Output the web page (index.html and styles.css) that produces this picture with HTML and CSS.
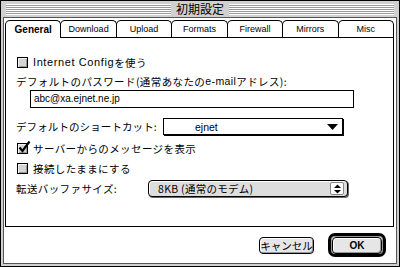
FILE: index.html
```html
<!DOCTYPE html>
<html lang="ja">
<head>
<meta charset="utf-8">
<title>初期設定</title>
<link rel="stylesheet" href="styles.css">
</head>
<body>
<div class="window">
  <div class="titlebar">
    <span class="stripes"></span>
    <span class="title">初期設定</span>
    <span class="stripes"></span>
  </div>
  <div class="frame">
    <div class="content">
      <div class="tabs">
        <div class="tab active">General</div>
        <div class="tab">Download</div>
        <div class="tab">Upload</div>
        <div class="tab">Formats</div>
        <div class="tab">Firewall</div>
        <div class="tab">Mirrors</div>
        <div class="tab">Misc</div>
      </div>
      <div class="panel">
        <div class="row r1"><span class="cb"></span><span class="latin">Internet Config</span>を使う</div>
        <div class="row r2">デフォルトのパスワード(通常あなたの<span class="latin2">e-mail</span>アドレス):</div>
        <div class="row r3"><div class="input">abc@xa.ejnet.ne.jp</div></div>
        <div class="row r4">
          <span class="label l4">デフォルトのショートカット:</span>
          <div class="popup">
            <span class="ptext">ejnet</span>
            <svg class="arrow" width="11" height="6" viewBox="0 0 11 6"><polygon points="0,0 11,0 5.5,6" fill="#000"/></svg>
          </div>
        </div>
        <div class="row r5"><span class="cb checked"><svg class="check" width="14" height="14" viewBox="0 0 14 14"><path d="M2.5 7.5 L5.5 11 L12.5 1.5" stroke="#000" stroke-width="2.2" fill="none"/></svg></span>サーバーからのメッセージを表示</div>
        <div class="row r6"><span class="cb"></span>接続したままにする</div>
        <div class="row r7">
          <span class="label l7">転送バッファサイズ:</span>
          <div class="popup gray">
            <span class="ptext2">8KB (通常のモデム)</span>
            <span class="stepper"><svg width="9" height="10" viewBox="0 0 9 10"><polygon points="1,4 8,4 4.5,0.5" fill="#000"/><polygon points="1,6 8,6 4.5,9.5" fill="#000"/></svg></span>
          </div>
        </div>
      </div>
      <div class="buttons">
        <div class="btn cancel">キャンセル</div>
        <div class="ring"><div class="btn ok">OK</div></div>
      </div>
    </div>
  </div>
</div>
</body>
</html>
```

FILE: styles.css
```css
* { box-sizing: border-box; }
html, body { margin: 0; padding: 0; }
body {
  width: 400px;
  height: 267px;
  overflow: hidden;
  background: #fff;
  font-family: "Noto Sans CJK JP", sans-serif;
  font-size: 10.5px;
  color: #000;
}
.window {
  width: 400px;
  height: 267px;
  border: 1px solid #000;
  background: #d0d0d0;
  display: flex;
  flex-direction: column;
}
.titlebar {
  height: 16px;
  display: flex;
  align-items: center;
  padding: 0 5px;
  gap: 4px;
}
.stripes {
  flex: 1;
  height: 11px;
  background: repeating-linear-gradient(to bottom, #ffffff 0 1px, #999999 1px 2px);
}
.title {
  font-size: 12px;
  line-height: 16px;
  padding: 0 1px;
}
.frame {
  flex: 1;
  display: flex;
  padding: 0 2px 2px;
}
.content {
  flex: 1;
  background: #fff;
  border: 1px solid #555;
  display: flex;
  flex-direction: column;
}
.tabs {
  display: flex;
  height: 17px;
  margin: 2px 2px 0 1px;
}
.tab {
  flex: 1;
  height: 17px;
  margin-left: -1px;
  border: 1px solid #000;
  border-bottom: none;
  border-radius: 5px 5px 0 0;
  background: #fff;
  display: flex;
  align-items: center;
  justify-content: center;
  font-family: "Liberation Sans", sans-serif;
  font-size: 9px;
}
.tab:first-child { margin-left: 0; }
.tab.active {
  height: 18px;
  position: relative;
  z-index: 1;
  font-weight: bold;
  font-size: 10px;
  padding-bottom: 1px;
}
.panel {
  height: 190px;
  margin: 0 2px 0 1px;
  border: 1px solid #000;
  padding: 17px 0 0 10px;
  display: flex;
  flex-direction: column;
  letter-spacing: 0.4px;
}
.row {
  display: flex;
  align-items: center;
  height: 14px;
  white-space: nowrap;
}
.latin { font-family: "Liberation Sans", sans-serif; font-size: 11px; letter-spacing: 0.6px; }
.latin2 { font-family: "Liberation Sans", sans-serif; font-size: 10.5px; }
.r2 { margin-top: 5px; }
.r3 { margin-top: 2px; height: 18px; }
.r4 { margin-top: 10px; height: 18px; align-items: flex-start; }
.r5 { margin-top: 5px; }
.r6 { margin-top: 6px; }
.r7 { margin-top: 5px; height: 18px; align-items: flex-start; }
.cb {
  position: relative;
  width: 11px;
  height: 11px;
  margin-left: 1px;
  margin-right: 5px;
  border: 1px solid #000;
  background: #d4d4d4;
  box-shadow: inset 1px 1px #f4f4f4, inset -1px -1px #9a9a9a;
  flex: none;
}
.check {
  position: absolute;
  left: -1px;
  top: -4px;
}
.input {
  margin-left: 14px;
  width: 324px;
  height: 18px;
  border: 1px solid #000;
  padding-left: 3px;
  font-family: "Liberation Sans", sans-serif;
  font-size: 10px;
  letter-spacing: 0;
  line-height: 16px;
}
.label { line-height: 17px; }
.l4 { width: 147px; letter-spacing: 0.1px; }
.l7 { width: 132px; }
.popup {
  position: relative;
  width: 180px;
  height: 17px;
  border: 1px solid #000;
  box-shadow: 1px 1px 0 #000;
  background: #fff;
  display: flex;
  align-items: center;
  letter-spacing: 0;
}
.ptext {
  padding-left: 31px;
  flex: 1;
  font-family: "Liberation Sans", sans-serif;
  font-size: 10.5px;
}
.arrow { margin-right: 4px; }
.popup.gray {
  width: 200px;
  border-radius: 4px;
  background: #dddddd;
  box-shadow: 1px 1px 0 #666, inset 1px 1px #fff;
  letter-spacing: 0.3px;
}
.ptext2 { padding-left: 9px; flex: 1; }
.stepper {
  width: 14px;
  height: 13px;
  margin-right: 3px;
  display: flex;
  align-items: center;
  justify-content: center;
  background: #fff;
  border: 1px solid #888;
  border-radius: 2px;
}
.buttons {
  flex: 1;
  display: flex;
  justify-content: flex-end;
  align-items: center;
  gap: 14px;
  padding-right: 10px;
}
.btn {
  height: 17px;
  border: 1px solid #000;
  border-radius: 4px;
  background: #e6e6e6;
  box-shadow: inset 1px 1px #fff, inset -1px -1px #999;
  display: flex;
  align-items: center;
  justify-content: center;
}
.cancel { width: 55px; margin-top: 1px; }
.ring {
  width: 58px;
  height: 24px;
  border: 3px solid #000;
  border-radius: 7px;
  padding: 1px 1px 0 1px;
  background: #fff;
  box-shadow: inset 0 0 0 1px #999;
}
.ok {
  width: 50px;
  font-family: "Liberation Sans", sans-serif;
  font-weight: bold;
  font-size: 10px;
}
```
